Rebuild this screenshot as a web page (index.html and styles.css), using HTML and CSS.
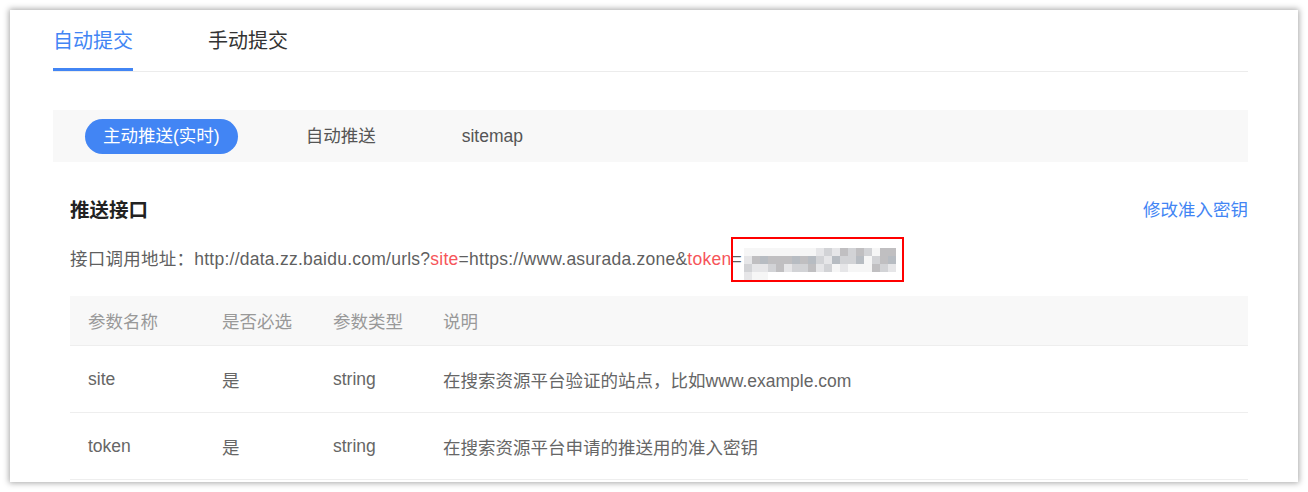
FILE: index.html
```html
<!DOCTYPE html>
<html lang="zh-CN">
<head>
<meta charset="utf-8">
<link rel="stylesheet" href="styles.css">
</head>
<body>
<div class="card">
  <div class="tabs">
    <div class="tab active">自动提交</div>
    <div class="tab">手动提交</div>
  </div>
  <div class="subtabs">
    <div class="subtab on">主动推送(实时)</div>
    <div class="subtab">自动推送</div>
    <div class="subtab">sitemap</div>
  </div>
  <div class="section">
    <div class="head">
      <div class="title">推送接口</div>
      <a class="link">修改准入密钥</a>
    </div>
    <div class="api">接口调用地址：http://data.zz.baidu.com/urls?<span class="red">site</span>=https://www.asurada.zone&amp;<span class="red">token</span>=<span class="token"><span class="mosaic">
<i class="a"></i><i class="a"></i><i class="a"></i><i class="a"></i><i class="a"></i><i class="a"></i><i class="a"></i><i class="a"></i><i class="a"></i><i class="b"></i><i class="c"></i><i class="b"></i><i class="d"></i><i class="c"></i><i class="d"></i><i class="c"></i><i class="a"></i><i class="d"></i><i class="d"></i><i class="b"></i>
<i class="d"></i><i class="e"></i><i class="d"></i><i class="d"></i><i class="d"></i><i class="e"></i><i class="d"></i><i class="e"></i><i class="c"></i><i class="b"></i><i class="e"></i><i class="c"></i><i class="c"></i><i class="e"></i><i class="a"></i><i class="c"></i><i class="d"></i><i class="e"></i><i class="c"></i><i class="b"></i>
<i class="b"></i><i class="c"></i><i class="d"></i><i class="b"></i><i class="c"></i><i class="c"></i><i class="d"></i><i class="b"></i><i class="c"></i><i class="a"></i><i class="b"></i><i class="a"></i><i class="a"></i><i class="a"></i><i class="d"></i><i class="c"></i><i class="b"></i><i class="b"></i><i class="a"></i><i class="a"></i>
</span><span class="redbox"></span></span></div>
    <div class="table">
      <div class="row th"><div>参数名称</div><div>是否必选</div><div>参数类型</div><div>说明</div></div>
      <div class="row"><div>site</div><div>是</div><div>string</div><div>在搜索资源平台验证的站点，比如www.example.com</div></div>
      <div class="row"><div>token</div><div>是</div><div>string</div><div>在搜索资源平台申请的推送用的准入密钥</div></div>
    </div>
  </div>
</div>
</body>
</html>
```

FILE: styles.css
```css
html, body {
  margin: 0;
  padding: 0;
  background: #ffffff;
}
body {
  font-family: "Liberation Sans", "Noto Sans CJK SC", sans-serif;
  font-size: 17.5px;
  color: #666;
}
.card {
  margin: 10px;
  width: 1288px;
  height: 472px;
  box-sizing: border-box;
  padding: 0 50px 0 43px;
  background: #fff;
  box-shadow: 0 0 6px 1px rgba(0, 0, 0, 0.35);
  overflow: hidden;
}
.tabs {
  display: flex;
  gap: 75px;
  border-bottom: 1px solid #ececec;
}
.tab {
  padding-top: 20px;
  padding-bottom: 16px;
  line-height: 22px;
  font-size: 20px;
  color: #333;
  border-bottom: 3px solid transparent;
}
.tab.active {
  color: #4285f4;
  border-bottom-color: #4285f4;
}
.subtabs {
  margin-top: 38px;
  height: 52px;
  background: #f8f8f8;
  display: flex;
  align-items: center;
  padding-left: 32px;
  gap: 50px;
}
.subtab {
  height: 35px;
  line-height: 35px;
  padding: 0 18px;
  border-radius: 18px;
  color: #555;
  font-size: 17.5px;
  margin-top: 1px;
}
.subtab.on {
  background: #4285f4;
  color: #fff;
}
.section {
  padding-left: 17px;
}
.head {
  margin-top: 36px;
  display: flex;
  justify-content: space-between;
  line-height: 24px;
}
.title {
  font-size: 19.5px;
  font-weight: bold;
  color: #222;
}
.link {
  color: #4285f4;
  font-size: 17.5px;
}
.api {
  margin-top: 25px;
  height: 24px;
  line-height: 24px;
  white-space: nowrap;
  letter-spacing: 0.25px;
  color: #5f5f5f;
}
.red {
  color: #f6555a;
}
.token {
  position: relative;
  display: inline-block;
  vertical-align: middle;
  width: 160px;
  height: 24px;
}
.mosaic {
  display: grid;
  grid-template-columns: repeat(19, 8px);
  grid-auto-rows: 8px;
  margin-left: 2px;
  margin-top: 0;
}
.mosaic i { display: block; }
.mosaic .a { background: #f6f6f6; }
.mosaic .b { background: #e6e6e8; }
.mosaic .c { background: #d2d3d6; }
.mosaic .d { background: #c0bfc1; }
.mosaic .e { background: #b7bcc2; }
.redbox {
  position: absolute;
  left: -11px;
  top: -11px;
  width: 169px;
  height: 41px;
  border: 2px solid #f00;
}
.table {
  margin-top: 25px;
}
.row {
  display: grid;
  grid-template-columns: 134px 111px 110px 1fr;
  height: 66px;
  align-items: center;
  border-bottom: 1px solid #eeeeee;
  padding-left: 18px;
  color: #666;
}
.row.th {
  height: 49px;
  background: #f8f8f8;
  color: #999;
}
```
